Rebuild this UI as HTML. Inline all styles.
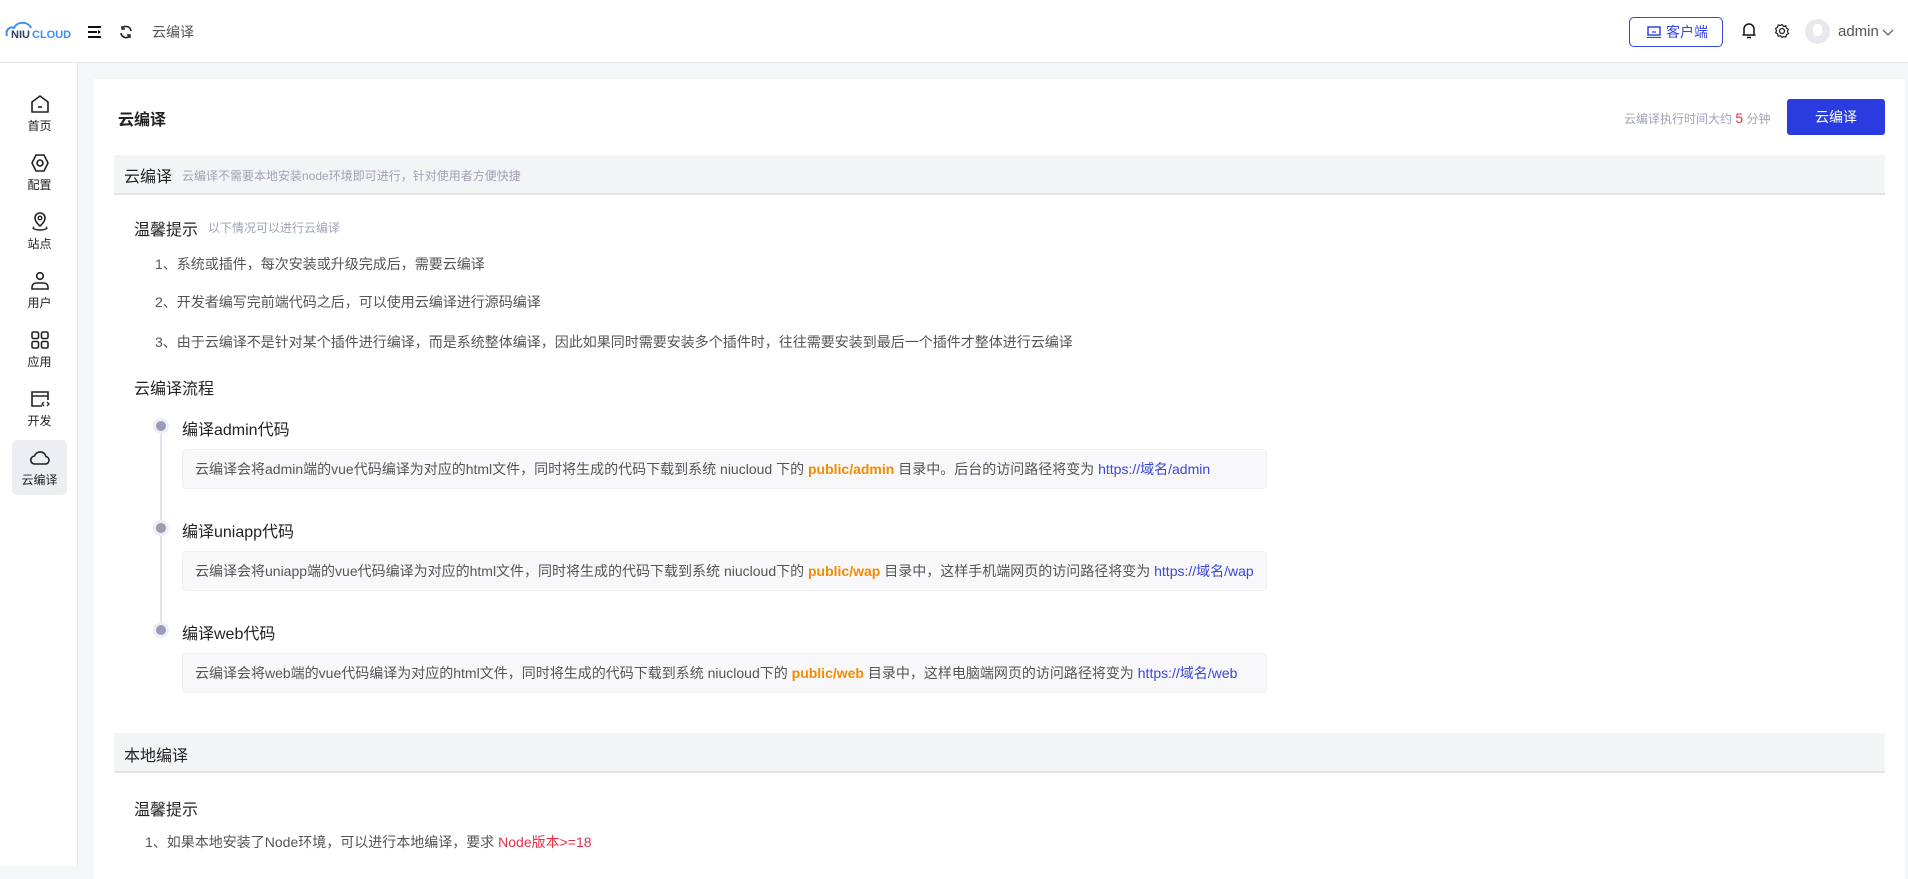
<!DOCTYPE html>
<html><head><meta charset="utf-8"><style>
*{margin:0;padding:0;box-sizing:border-box}
body{width:1908px;height:866px;overflow:hidden;background:#f5f6f8;font-family:"Liberation Sans","Noto Sans CJK SC",sans-serif;color:#333;position:relative}
.a{position:absolute;white-space:nowrap}
.hdr{left:0;top:0;width:1908px;height:63px;background:#fff;border-bottom:1px solid #e6e6e6}
.side{left:0;top:63px;width:78px;height:803px;background:#fff;border-right:1px solid #e8e8e8}
.nav{position:absolute;left:12px;width:55px;height:55px;text-align:center;font-size:12px;color:#222}
.nav svg{display:block;margin:8px auto 3px}
.card{left:94px;top:79px;width:1811px;height:800px;background:#fff}
.bar{left:114px;width:1771px;height:40px;background:#f3f4f6;border-bottom:2px solid #e3e4e7}
.t16{font-size:16px;color:#222}
.sub{font-size:12px;color:#9ea3b5}
.li{font-size:14px;color:#555;left:155px}
.box{left:182px;width:1085px;height:40px;background:#f8f8fa;border:1px solid #f0f0f3;border-radius:4px;font-size:14px;color:#555;padding-left:12px;line-height:38px}
.o{color:#f08c00;font-weight:bold}.b{color:#3a47d8}
.dot{width:16px;height:16px;border-radius:50%;background:#9a9cb4;border:3px solid #eceef3;left:153px}
</style></head><body>
<div class="a hdr"></div>
<svg class="a" style="left:4px;top:20px" width="72" height="24" viewBox="0 0 72 24"><path d="M3 16 C1 10 6 6 10 8 C13 1 24 1 27 8" fill="none" stroke="#3d8ef0" stroke-width="2"/><text x="7" y="18" font-size="11" font-weight="bold" fill="#2f3f60" font-family="Liberation Sans">NIU</text><text x="28" y="18" font-size="11" font-weight="bold" fill="#3d8ef0" font-family="Liberation Sans">CLOUD</text></svg>
<svg class="a" style="left:88px;top:26px" width="13" height="12"><path d="M0 1h13M0 6h9M0 11h13" stroke="#111" stroke-width="2"/><path d="M10 4l3 2-3 2z" fill="#111"/></svg>
<svg class="a" style="left:119px;top:25px" width="14" height="14" viewBox="0 0 14 14"><path d="M12 6A5 5 0 0 0 3 3.5M2 8a5 5 0 0 0 9 2.5" fill="none" stroke="#222" stroke-width="1.6"/><path d="M3 1v3h3M11 13v-3H8" fill="none" stroke="#222" stroke-width="1.4"/></svg>
<div class="a" style="left:152px;top:22px;font-size:14px;color:#555">云编译</div>
<div class="a" style="left:1629px;top:17px;width:94px;height:30px;border:1px solid #3346e0;border-radius:5px;font-size:14px;color:#3346e0;line-height:28px;padding-left:36px">客户端</div>
<svg class="a" style="left:1647px;top:26px" width="14" height="12"><rect x="1" y="1" width="12" height="8" fill="none" stroke="#3346e0" stroke-width="1.5"/><path d="M0 11.5h14M5 6h4" stroke="#3346e0" stroke-width="1.3"/></svg>
<svg class="a" style="left:1742px;top:22px" width="14" height="17" viewBox="0 0 14 17"><path d="M2 13V7a5 5 0 0 1 10 0v6M0.5 13h13M5 15.5h4" fill="none" stroke="#111" stroke-width="1.5"/></svg>
<svg class="a" style="left:1774px;top:23px" width="16" height="16" viewBox="0 0 16 16"><circle cx="8" cy="8" r="2.5" fill="none" stroke="#222" stroke-width="1.3"/><path d="M8 1.5l1.5 1.8 2.3-.5.6 2.3 2 1.2-1 2.1 1 2.1-2 1.2-.6 2.3-2.3-.5L8 14.5l-1.5-1.8-2.3.5-.6-2.3-2-1.2 1-2.1-1-2.1 2-1.2.6-2.3 2.3.5z" fill="none" stroke="#222" stroke-width="1.2"/></svg>
<div class="a" style="left:1805px;top:19px;width:25px;height:25px;border-radius:50%;background:#e8e9ee"></div>
<div class="a" style="left:1813px;top:24px;width:9px;height:12px;border-radius:4px;background:#fff"></div>
<div class="a" style="left:1838px;top:23px;font-size:15px;color:#555">admin</div>
<svg class="a" style="left:1882px;top:29px" width="12" height="8"><path d="M1 1l5 5 5-5" fill="none" stroke="#666" stroke-width="1.3"/></svg>

<div class="a side"></div>
<div class="nav" style="top:86px"><svg width="20" height="20" viewBox="0 0 20 20"><path d="M2 8l8-6 8 6v10H2z" fill="none" stroke="#222" stroke-width="1.6" stroke-linejoin="round"/><path d="M8 13h4" stroke="#222" stroke-width="1.6"/></svg>首页</div>
<div class="nav" style="top:145px"><svg width="20" height="20" viewBox="0 0 20 20"><path d="M6 2h8l4 8-4 8H6l-4-8z" fill="none" stroke="#222" stroke-width="1.6"/><circle cx="10" cy="10" r="3" fill="none" stroke="#222" stroke-width="1.6"/></svg>配置</div>
<div class="nav" style="top:204px"><svg width="20" height="20" viewBox="0 0 20 20"><path d="M10 14s-5-4-5-8a5 5 0 0 1 10 0c0 4-5 8-5 8z" fill="none" stroke="#222" stroke-width="1.6"/><circle cx="10" cy="6" r="1.8" fill="none" stroke="#222" stroke-width="1.4"/><path d="M4 15c-3 2 3 3 6 3s9-1 6-3" fill="none" stroke="#222" stroke-width="1.4"/></svg>站点</div>
<div class="nav" style="top:263px"><svg width="20" height="20" viewBox="0 0 20 20"><circle cx="10" cy="5" r="3.3" fill="none" stroke="#222" stroke-width="1.6"/><path d="M2 18v-2a4 4 0 0 1 4-4h8a4 4 0 0 1 4 4v2z" fill="none" stroke="#222" stroke-width="1.6"/></svg>用户</div>
<div class="nav" style="top:322px"><svg width="20" height="20" viewBox="0 0 20 20"><rect x="2" y="2" width="6.5" height="6.5" rx="1.5" fill="none" stroke="#222" stroke-width="1.6"/><rect x="11.5" y="2" width="6.5" height="6.5" rx="1.5" fill="none" stroke="#222" stroke-width="1.6"/><rect x="2" y="11.5" width="6.5" height="6.5" rx="1.5" fill="none" stroke="#222" stroke-width="1.6"/><rect x="11.5" y="11.5" width="6.5" height="6.5" rx="1.5" fill="none" stroke="#222" stroke-width="1.6"/></svg>应用</div>
<div class="nav" style="top:381px"><svg width="20" height="20" viewBox="0 0 20 20"><path d="M12 17H2V3h16v8M2 7h16" fill="none" stroke="#222" stroke-width="1.6"/><path d="M14 13l-2 2 2 2M17 13l2 2-2 2" fill="none" stroke="#222" stroke-width="1.3"/></svg>开发</div>
<div class="nav" style="top:440px;background:#eceef2;border-radius:5px"><svg width="20" height="20" viewBox="0 0 20 20"><path d="M5 16a4 4 0 0 1-.5-8A6 6 0 0 1 16 8.5a3.8 3.8 0 0 1-.5 7.5z" fill="none" stroke="#222" stroke-width="1.6"/></svg>云编译</div>

<div class="a card"></div>
<div class="a" style="left:118px;top:106px;font-size:16px;font-weight:bold;color:#222">云编译</div>
<div class="a" style="left:1624px;top:110px;font-size:12px;color:#9ea3b5">云编译执行时间大约 <span style="color:#e8304a;font-size:14px">5</span> 分钟</div>
<div class="a" style="left:1787px;top:99px;width:98px;height:36px;background:#2a3be0;border-radius:3px;color:#fff;font-size:14px;text-align:center;line-height:36px">云编译</div>

<div class="a bar" style="top:155px"></div>
<div class="a t16" style="left:124px;top:163px">云编译</div>
<div class="a sub" style="left:182px;top:167px">云编译不需要本地安装node环境即可进行，针对使用者方便快捷</div>

<div class="a t16" style="left:134px;top:216px">温馨提示</div>
<div class="a sub" style="left:208px;top:219px">以下情况可以进行云编译</div>
<div class="a li" style="top:254px">1、系统或插件，每次安装或升级完成后，需要云编译</div>
<div class="a li" style="top:292px">2、开发者编写完前端代码之后，可以使用云编译进行源码编译</div>
<div class="a li" style="top:332px">3、由于云编译不是针对某个插件进行编译，而是系统整体编译，因此如果同时需要安装多个插件时，往往需要安装到最后一个插件才整体进行云编译</div>
<div class="a t16" style="left:134px;top:375px">云编译流程</div>

<div class="a" style="left:160px;top:426px;width:2px;height:204px;background:#e3e4ea"></div>
<div class="a dot" style="top:418px"></div>
<div class="a dot" style="top:520px"></div>
<div class="a dot" style="top:622px"></div>
<div class="a t16" style="left:182px;top:416px">编译admin代码</div>
<div class="a box" style="top:449px">云编译会将admin端的vue代码编译为对应的html文件，同时将生成的代码下载到系统 niucloud 下的 <span class="o">public/admin</span> 目录中。后台的访问路径将变为 <span class="b">https://域名/admin</span></div>
<div class="a t16" style="left:182px;top:518px">编译uniapp代码</div>
<div class="a box" style="top:551px">云编译会将uniapp端的vue代码编译为对应的html文件，同时将生成的代码下载到系统 niucloud下的 <span class="o">public/wap</span> 目录中，这样手机端网页的访问路径将变为 <span class="b">https://域名/wap</span></div>
<div class="a t16" style="left:182px;top:620px">编译web代码</div>
<div class="a box" style="top:653px">云编译会将web端的vue代码编译为对应的html文件，同时将生成的代码下载到系统 niucloud下的 <span class="o">public/web</span> 目录中，这样电脑端网页的访问路径将变为 <span class="b">https://域名/web</span></div>

<div class="a bar" style="top:733px"></div>
<div class="a t16" style="left:124px;top:742px">本地编译</div>
<div class="a t16" style="left:134px;top:796px">温馨提示</div>
<div class="a li" style="top:832px;left:145px">1、如果本地安装了Node环境，可以进行本地编译，要求 <span style="color:#e8304a">Node版本&gt;=18</span></div>
</body></html>
